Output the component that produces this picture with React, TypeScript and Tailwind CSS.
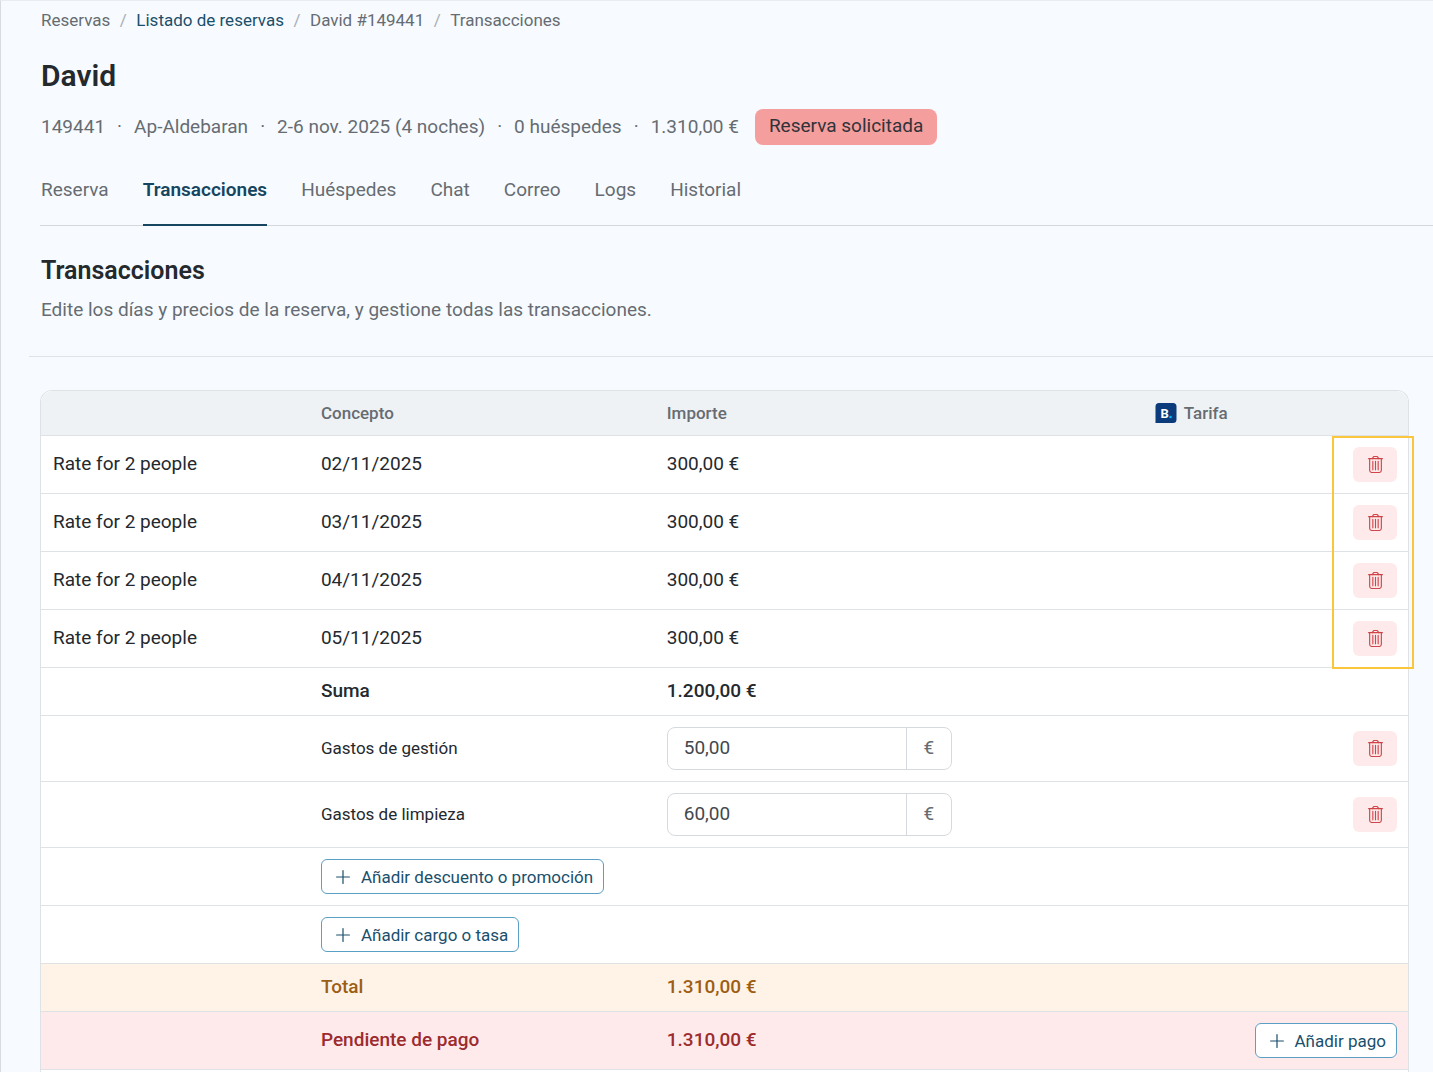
import type { ReactNode } from 'react'

const breadcrumbs = [
  { label: 'Reservas' },
  { label: 'Listado de reservas', href: '#listado' },
  { label: 'David #149441' },
  { label: 'Transacciones' },
]

const details = ['149441', 'Ap-Aldebaran', '2-6 nov. 2025 (4 noches)', '0 huéspedes', '1.310,00 €']

const tabs = ['Reserva', 'Transacciones', 'Huéspedes', 'Chat', 'Correo', 'Logs', 'Historial']

const nights = ['02/11/2025', '03/11/2025', '04/11/2025', '05/11/2025']

const charges = [
  { id: 'gestion', label: 'Gastos de gestión', amount: '50,00' },
  { id: 'limpieza', label: 'Gastos de limpieza', amount: '60,00' },
]

function TrashIcon() {
  return (
    <svg viewBox="0 0 448 512" className="h-[17px] w-[15px]" fill="none" stroke="currentColor" strokeWidth="34" strokeLinecap="round" strokeLinejoin="round">
      <path d="M16 80H432" />
      <path d="M128 80L156 35C163 23 173 16 187 16H261C275 16 285 23 292 35L320 80" />
      <path d="M48 80V432C48 467 77 496 112 496H336C371 496 400 467 400 432V80" />
      <path d="M144 160V416M224 160V416M304 160V416" />
    </svg>
  )
}

function PlusIcon() {
  return (
    <svg viewBox="0 0 14 14" className="size-[14px]" fill="none" stroke="currentColor" strokeWidth="1.2" strokeLinecap="round">
      <path d="M7 0.6V13.4M0.6 7H13.4" />
    </svg>
  )
}

function BookingIcon() {
  return (
    <svg viewBox="0 0 22 20" className="h-5 w-[22px]" aria-hidden="true">
      <path d="M4 0H18A3.500 3.500 0 0 1 21.500 3.500V16.500A3.500 3.500 0 0 1 18 20H0.500V3.500A3.500 3.500 0 0 1 4 0Z" fill="#0c3b7c" />
      <text x="5.500" y="15" fontSize="13" fontWeight="700" fontFamily="Roboto, sans-serif" fill="#fff">
        B
      </text>
      <circle cx="15.500" cy="14" r="1.300" fill="#00b8f0" />
    </svg>
  )
}

function DeleteButton({ label }: { label: string }) {
  return (
    <button
      type="button"
      aria-label={label}
      className="ml-auto flex h-[35px] w-11 items-center justify-center rounded-md bg-[#feeaeb] text-[#cf4548]"
    >
      <TrashIcon />
    </button>
  )
}

function AddButton({ children }: { children: ReactNode }) {
  return (
    <button
      type="button"
      className="inline-flex h-[35px] items-center gap-[11px] rounded-md border border-[#5a9fc6] bg-white pr-[10px] pl-[14px] align-top text-[17px] text-[#1a4f6c]"
    >
      <PlusIcon />
      {children}
    </button>
  )
}

export default function App() {
  return (
    <div className="flex min-h-screen flex-col border-t border-l border-t-[#eaedf0] border-l-[#d8dce0] bg-[#f7fbff] pl-10 font-[Roboto,sans-serif] text-[19px] leading-7 text-[#24292e]">
      <nav aria-label="Ruta" className="pt-[7px]">
        <ol className="flex text-[17px] leading-6 text-[#666c72]">
          {breadcrumbs.map((item, i) => (
            <li key={item.label} className="flex">
              {i > 0 && <span className="w-[26px] text-center text-[#a9aeb3]">/</span>}
              {item.href ? (
                <a href={item.href} className="text-[#1a4f6c]">{item.label}</a>
              ) : (
                item.label
              )}
            </li>
          ))}
        </ol>
      </nav>

      <h1 className="mt-6 text-[30px] leading-10 font-semibold">David</h1>

      <div className="mt-[13px] flex items-center text-[#666c72]">
        {details.map((item, i) => (
          <span key={item}>
            {i > 0 && <span className="inline-block w-[29px] text-center">·</span>}
            {item}
          </span>
        ))}
        <span className="ml-4 flex h-9 items-center rounded-lg bg-[#f59e9e] px-[14px] pb-0.5 text-[#30333a]">
          Reserva solicitada
        </span>
      </div>

      <nav aria-label="Secciones" className="mt-[27px] -ml-px border-b border-[#d3d8dd] pl-px">
        <ul className="flex gap-[34px]">
          {tabs.map((tab) => (
            <li key={tab} className="-mb-px">
              <a
                href={`#${tab.toLowerCase()}`}
                className={
                  tab === 'Transacciones'
                    ? 'block h-[54px] border-b-2 border-[#16455f] pt-1 font-semibold text-[#16455f]'
                    : 'block h-[54px] pt-1 text-[#666c72]'
                }
              >
                {tab}
              </a>
            </li>
          ))}
        </ul>
      </nav>

      <section className="mt-[29px]">
        <h2 className="text-[25px] leading-8 font-semibold">Transacciones</h2>
        <p className="mt-[9px] text-[#666c72]">
          Edite los días y precios de la reserva, y gestione todas las transacciones.
        </p>
      </section>

      <hr className="mt-8 -ml-3 border-[#dfe3e6]" />

      <div className="relative mt-[33px] mr-6 -ml-px flex-1 rounded-t-xl border border-b-0 border-[#dfe2e5] bg-white">
        <table className="w-full table-fixed border-separate border-spacing-0 [&_td]:border-b [&_td]:border-[#dfe2e5] [&_td]:pr-[11px] [&_td]:pl-3 [&_th]:px-3">
          <colgroup>
            <col className="w-[19.6%]" />
            <col className="w-[25.3%]" />
            <col className="w-[35.7%]" />
            <col />
          </colgroup>
          <thead className="text-left text-[17px] text-[#666c72] [&_th]:border-b [&_th]:border-[#dfe2e5] [&_th]:bg-[#eff2f5] [&_th]:font-medium">
            <tr className="h-[45px]">
              <th className="rounded-tl-xl" />
              <th>Concepto</th>
              <th>Importe</th>
              <th className="rounded-tr-xl">
                <span className="flex items-center gap-[7px]">
                  <BookingIcon />
                  Tarifa
                </span>
              </th>
            </tr>
          </thead>
          <tbody>
            {nights.map((date) => (
              <tr key={date} className="h-[58px]">
                <td className="pb-0.5">Rate for 2 people</td>
                <td className="pb-0.5">{date}</td>
                <td className="pb-0.5">300,00 €</td>
                <td>
                  <DeleteButton label={`Eliminar ${date}`} />
                </td>
              </tr>
            ))}
            <tr className="h-12 font-medium">
              <td />
              <td className="pb-0.5">Suma</td>
              <td className="pb-0.5">1.200,00 €</td>
              <td />
            </tr>
            {charges.map((charge) => (
              <tr key={charge.id} className="h-[66px]">
                <td />
                <td className="pb-0.5 text-[17px]">
                  <label htmlFor={charge.id}>{charge.label}</label>
                </td>
                <td>
                  <div className="flex h-[43px] w-[285px] rounded-lg border border-[#d6dadf] text-[#43484e]">
                    <input id={charge.id} defaultValue={charge.amount} className="min-w-0 flex-1 rounded-l-lg px-4 pb-0.5" />
                    <span className="flex w-[45px] items-center justify-center border-l border-[#d6dadf] pb-0.5 text-[#666c72]">
                      €
                    </span>
                  </div>
                </td>
                <td>
                  <DeleteButton label={`Eliminar ${charge.label}`} />
                </td>
              </tr>
            ))}
            <tr className="h-[58px]">
              <td />
              <td>
                <AddButton>Añadir descuento o promoción</AddButton>
              </td>
              <td />
              <td />
            </tr>
            <tr className="h-[58px]">
              <td />
              <td>
                <AddButton>Añadir cargo o tasa</AddButton>
              </td>
              <td />
              <td />
            </tr>
            <tr className="h-12 bg-[#fff3e8] font-medium text-[#9c5e15]">
              <td />
              <td className="pb-0.5">Total</td>
              <td className="pb-0.5">1.310,00 €</td>
              <td />
            </tr>
            <tr className="h-[58px] bg-[#feeaeb] font-medium text-[#9c2b2e]">
              <td />
              <td className="pb-0.5">Pendiente de pago</td>
              <td className="pb-0.5">1.310,00 €</td>
              <td className="text-right font-normal">
                <AddButton>Añadir pago</AddButton>
              </td>
            </tr>
          </tbody>
        </table>

        {/* marco sobre los botones de borrar noches */}
        <div className="pointer-events-none absolute top-[45px] -right-1.5 h-[233px] w-[82px] border-2 border-[#fac63c]" />
      </div>
    </div>
  )
}
